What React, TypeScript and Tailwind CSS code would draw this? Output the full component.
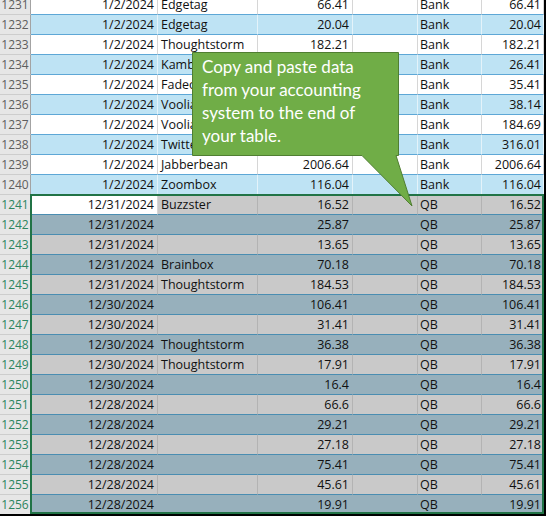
type Row = {
  n: number;
  date: string;
  name: string;
  amt: string;
  src: string;
  total: string;
};

// Upper block: bank rows already in the table. Lower block: pasted QB rows (selected).
const ROWS: Row[] = [
  { n: 1231, date: "1/2/2024", name: "Edgetag", amt: "66.41", src: "Bank", total: "66.41" },
  { n: 1232, date: "1/2/2024", name: "Edgetag", amt: "20.04", src: "Bank", total: "20.04" },
  { n: 1233, date: "1/2/2024", name: "Thoughtstorm", amt: "182.21", src: "Bank", total: "182.21" },
  { n: 1234, date: "1/2/2024", name: "Kamba", amt: "26.41", src: "Bank", total: "26.41" },
  { n: 1235, date: "1/2/2024", name: "Fadeo", amt: "35.41", src: "Bank", total: "35.41" },
  { n: 1236, date: "1/2/2024", name: "Voolia", amt: "38.14", src: "Bank", total: "38.14" },
  { n: 1237, date: "1/2/2024", name: "Voolia", amt: "184.69", src: "Bank", total: "184.69" },
  { n: 1238, date: "1/2/2024", name: "Twitterbeat", amt: "316.01", src: "Bank", total: "316.01" },
  { n: 1239, date: "1/2/2024", name: "Jabberbean", amt: "2006.64", src: "Bank", total: "2006.64" },
  { n: 1240, date: "1/2/2024", name: "Zoombox", amt: "116.04", src: "Bank", total: "116.04" },
  { n: 1241, date: "12/31/2024", name: "Buzzster", amt: "16.52", src: "QB", total: "16.52" },
  { n: 1242, date: "12/31/2024", name: "", amt: "25.87", src: "QB", total: "25.87" },
  { n: 1243, date: "12/31/2024", name: "", amt: "13.65", src: "QB", total: "13.65" },
  { n: 1244, date: "12/31/2024", name: "Brainbox", amt: "70.18", src: "QB", total: "70.18" },
  { n: 1245, date: "12/31/2024", name: "Thoughtstorm", amt: "184.53", src: "QB", total: "184.53" },
  { n: 1246, date: "12/30/2024", name: "", amt: "106.41", src: "QB", total: "106.41" },
  { n: 1247, date: "12/30/2024", name: "", amt: "31.41", src: "QB", total: "31.41" },
  { n: 1248, date: "12/30/2024", name: "Thoughtstorm", amt: "36.38", src: "QB", total: "36.38" },
  { n: 1249, date: "12/30/2024", name: "Thoughtstorm", amt: "17.91", src: "QB", total: "17.91" },
  { n: 1250, date: "12/30/2024", name: "", amt: "16.4", src: "QB", total: "16.4" },
  { n: 1251, date: "12/28/2024", name: "", amt: "66.6", src: "QB", total: "66.6" },
  { n: 1252, date: "12/28/2024", name: "", amt: "29.21", src: "QB", total: "29.21" },
  { n: 1253, date: "12/28/2024", name: "", amt: "27.18", src: "QB", total: "27.18" },
  { n: 1254, date: "12/28/2024", name: "", amt: "75.41", src: "QB", total: "75.41" },
  { n: 1255, date: "12/28/2024", name: "", amt: "45.61", src: "QB", total: "45.61" },
  { n: 1256, date: "12/28/2024", name: "", amt: "19.91", src: "QB", total: "19.91" },
];

const THEMES = {
  white: { bg: "bg-white", line: "border-b-[#5DA7D6]", v: "border-r-[#D6D6D6]" },
  blue: { bg: "bg-[#BEE3F4]", line: "border-b-[#5DA7D6]", v: "border-r-[#E4F3FA]" },
  gray: { bg: "bg-[#C9C9C9]", line: "border-b-[#4A8DB1]", v: "border-r-[#B3B3B3]" },
  slate: { bg: "bg-[#97B0BC]", line: "border-b-[#4A8DB1]", v: "border-r-[#97B0BC]" },
};

function themeFor(n: number) {
  if (n <= 1240) return n % 2 === 0 ? THEMES.blue : THEMES.white;
  return n % 2 === 0 ? THEMES.slate : THEMES.gray;
}

function SheetRow({ r }: { r: Row }) {
  const t = themeFor(r.n);
  const selected = r.n >= 1241;
  const cell = `h-[20px] border-b border-r overflow-hidden whitespace-nowrap leading-[19px] ${t.bg} ${t.line} ${t.v}`;
  return (
    <div className="grid grid-cols-[31px_127px_100px_95px_65px_64px_62px]">
      <div
        className={`h-[20px] border-b border-r border-b-[#CDCDCD] border-r-[#A3A3A3] bg-[#E6E6E6] text-center text-[12px] leading-[19px] ${
          selected ? "text-[#2C8560]" : "text-[#5E5E5E]"
        }`}
      >
        {r.n}
      </div>
      <div
        className={
          r.n === 1241
            ? `h-[20px] border-b border-r leading-[19px] bg-white ${t.line} border-r-[#D6D6D6] pr-[3px] text-right`
            : `${cell} pr-[3px] text-right`
        }
      >
        {r.date}
      </div>
      <div className={`${cell} pl-[3px]`}>{r.name}</div>
      <div className={`${cell} pr-[3px] text-right`}>{r.amt}</div>
      <div className={cell}></div>
      <div className={`${cell} pl-[2px]`}>{r.src}</div>
      <div className={`${cell} pr-[2px] text-right`}>{r.total}</div>
    </div>
  );
}

export default function App() {
  return (
    <div className="w-[549px] h-[516px] bg-white">
      <div className="relative w-[546px] h-[516px] overflow-hidden border-r-2 border-b-2 border-black font-['Open_Sans',sans-serif] text-[12.5px] text-[#111]">
        <div className="-mt-[5px]">
          {ROWS.map((r) => (
            <SheetRow key={r.n} r={r} />
          ))}
        </div>

        {/* selection outline around the pasted rows */}
        <div className="absolute left-[30px] top-[194px] w-[514px] h-[320px] border-2 border-[#217346] pointer-events-none" />

        {/* callout shape */}
        <svg className="absolute left-0 top-0 pointer-events-none" width="546" height="516">
          <path
            d="M192.5 52.5 H398.5 V155.5 H396 L412 206 L362 155.5 H192.5 Z"
            fill="#70AD47"
            stroke="#507E32"
            strokeWidth="1"
          />
        </svg>
        <div className="absolute left-[202px] top-[55px] w-[190px] font-['Lato',sans-serif] text-[17px] leading-[23px] text-white">
          Copy and paste data from your accounting system to the end of your table.
        </div>
      </div>
    </div>
  );
}
